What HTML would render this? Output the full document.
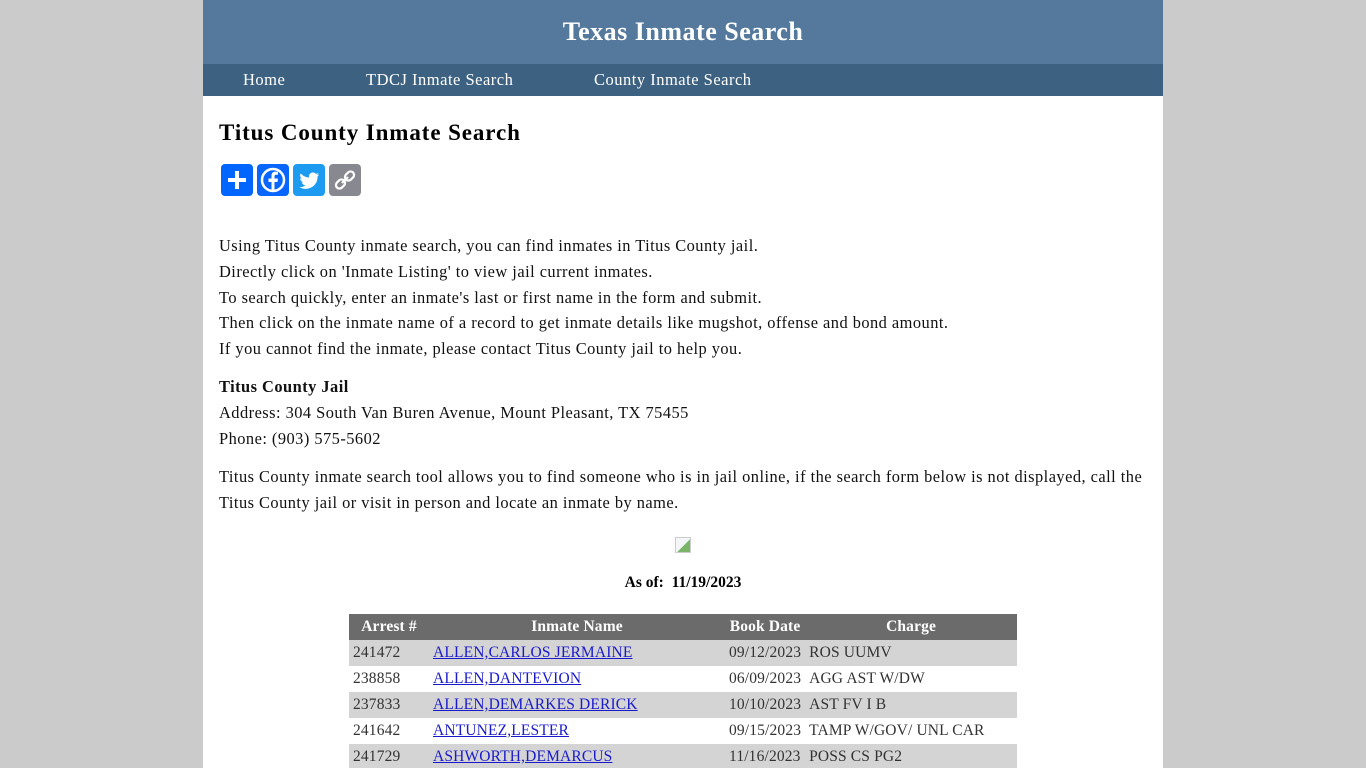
<!DOCTYPE html>
<html><head><meta charset="utf-8"><style>
body{margin:0;background:#cbcbcb;font-family:"Liberation Serif",serif;}
.wrap{position:absolute;left:203px;top:0;width:960px;height:768px;background:#fff;overflow:hidden}
.hd{height:64px;background:#54799d;color:#fff;text-align:center;font-weight:bold;font-size:26px;line-height:64px;letter-spacing:0.5px}
.nav{height:32px;background:#3d6180;position:relative}
.nav a{position:absolute;top:0;line-height:32px;color:#fff;text-decoration:none;font-size:16.5px;letter-spacing:0.5px}
h1{position:absolute;left:16px;top:120px;margin:0;font-size:23px;letter-spacing:0.9px}
.sh{position:absolute;top:164px;width:32px;height:32px;border-radius:4px}
.txt{position:absolute;left:16px;font-size:16.4px;letter-spacing:0.47px;line-height:25.8px;color:#111}
table{position:absolute;left:146px;top:614px;width:668px;border-collapse:collapse;font-size:15.5px;letter-spacing:0.15px}
th{background:#6b6b6b;color:#fff;height:26px;padding:0 4px;font-weight:bold}
td{height:26px;padding:0 4px;color:#333}
tr:nth-child(even) td{background:#d4d4d4}
td a{color:#1a1acc;text-decoration:underline}
</style></head><body><div class="wrap">
<div class="hd">Texas Inmate Search</div>
<div class="nav"><a style="left:40px">Home</a><a style="left:163px">TDCJ Inmate Search</a><a style="left:391px">County Inmate Search</a></div>
<h1>Titus County Inmate Search</h1>
<div class="sh" style="left:18px;background:#0166ff"><svg width="32" height="32"><path d="M16 7v18M7 16h18" stroke="#fff" stroke-width="4"/></svg></div>
<div class="sh" style="left:54px;background:#0866ff"><svg width="32" height="32"><circle cx="16" cy="16" r="11" fill="none" stroke="#fff" stroke-width="2.5"/><path d="M17.5 27v-9h3l.5-3.5h-3.5v-2c0-1 .4-1.7 1.8-1.7H21V7.8c-.5-.1-1.4-.2-2.5-.2-2.5 0-4 1.5-4 4.1v2.8h-3V18h3v9z" fill="#fff"/></svg></div>
<div class="sh" style="left:90px;background:#1d9bf0"><svg width="32" height="32"><path d="M26 10.5c-.7.3-1.5.5-2.3.6.8-.5 1.5-1.3 1.8-2.2-.8.5-1.7.8-2.6 1a4 4 0 0 0-6.9 3.7c-3.4-.2-6.3-1.8-8.3-4.2-1.1 1.9-.5 4.2 1.3 5.4-.7 0-1.300-.2-1.8-.5 0 2 1.4 3.6 3.3 4-.6.2-1.2.2-1.8.1.5 1.6 2 2.8 3.8 2.8A8.2 8.2 0 0 1 6.5 23a11.7 11.7 0 0 0 18-10.4c.6-.6 1.1-1.2 1.5-2.1z" fill="#fff"/></svg></div>
<div class="sh" style="left:126px;background:#888890"><svg width="32" height="32"><g fill="none" stroke="#fff" stroke-width="2.2"><rect x="8" y="15" width="7" height="10" rx="3.5" transform="rotate(45 11.5 20)"/><rect x="17" y="7" width="7" height="10" rx="3.5" transform="rotate(45 20.5 12)"/><path d="M13 19l6-6"/></g></svg></div>
<div class="txt" style="top:233px">Using Titus County inmate search, you can find inmates in Titus County jail.<br>Directly click on 'Inmate Listing' to view jail current inmates.<br>To search quickly, enter an inmate's last or first name in the form and submit.<br>Then click on the inmate name of a record to get inmate details like mugshot, offense and bond amount.<br>If you cannot find the inmate, please contact Titus County jail to help you.</div>
<div class="txt" style="top:374px"><b>Titus County Jail</b><br>Address: 304 South Van Buren Avenue, Mount Pleasant, TX 75455<br>Phone: (903) 575-5602</div>
<div class="txt" style="top:464px;width:930px">Titus County inmate search tool allows you to find someone who is in jail online, if the search form below is not displayed, call the Titus County jail or visit in person and locate an inmate by name.</div>
<div style="position:absolute;left:472px;top:537px;width:14px;height:14px;border:1px solid #ccc;background:linear-gradient(135deg,#f4f6fa 55%,#7bb56a 55%)"></div>
<div style="position:absolute;left:0;width:960px;top:574px;text-align:center;font-weight:bold;font-size:15.5px">As of:&nbsp; 11/19/2023</div>
<table>
<tr><th style="width:72px">Arrest #</th><th style="width:288px">Inmate Name</th><th style="width:72px">Book Date</th><th>Charge</th></tr>
<tr><td>241472</td><td><a>ALLEN,CARLOS JERMAINE</a></td><td>09/12/2023</td><td>ROS UUMV</td></tr>
<tr><td>238858</td><td><a>ALLEN,DANTEVION</a></td><td>06/09/2023</td><td>AGG AST W/DW</td></tr>
<tr><td>237833</td><td><a>ALLEN,DEMARKES DERICK</a></td><td>10/10/2023</td><td>AST FV I B</td></tr>
<tr><td>241642</td><td><a>ANTUNEZ,LESTER</a></td><td>09/15/2023</td><td>TAMP W/GOV/ UNL CAR</td></tr>
<tr><td>241729</td><td><a>ASHWORTH,DEMARCUS</a></td><td>11/16/2023</td><td>POSS CS PG2</td></tr>
</table>
</div></body></html>
